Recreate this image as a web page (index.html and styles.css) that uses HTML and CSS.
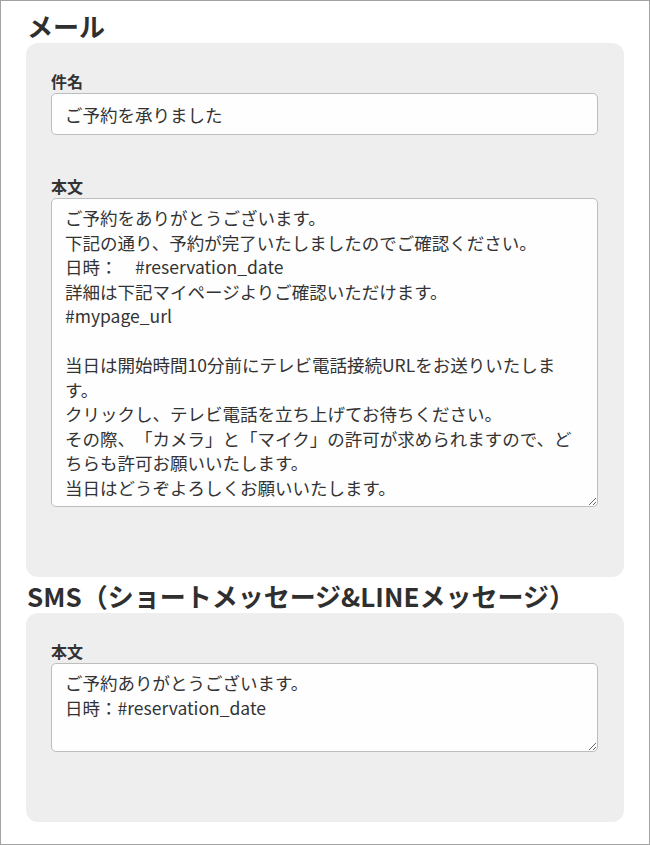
FILE: index.html
```html
<!DOCTYPE html>
<html lang="ja">
<head>
    <meta charset="utf-8">
    <title>メッセージ設定</title>
    <link rel="stylesheet" href="styles.css">
</head>
<body>
<div class="frame">
    <section class="section">
        <h2 class="section-title">メール</h2>
        <div class="panel">
            <div class="field">
                <label class="field-label" for="mail-subject">件名</label>
                <input class="text-input" id="mail-subject" type="text" value="ご予約を承りました">
            </div>
            <div class="field">
                <label class="field-label" for="mail-body">本文</label>
                <textarea class="text-area mail-body" id="mail-body">ご予約をありがとうございます。
下記の通り、予約が完了いたしましたのでご確認ください。
日時：　#reservation_date
詳細は下記マイページよりご確認いただけます。
#mypage_url

当日は開始時間10分前にテレビ電話接続URLをお送りいたします。
クリックし、テレビ電話を立ち上げてお待ちください。
その際、「カメラ」と「マイク」の許可が求められますので、どちらも許可お願いいたします。
当日はどうぞよろしくお願いいたします。</textarea>
            </div>
        </div>
    </section>
    <section class="section">
        <h2 class="section-title">SMS（ショートメッセージ&amp;LINEメッセージ）</h2>
        <div class="panel">
            <div class="field">
                <label class="field-label" for="sms-body">本文</label>
                <textarea class="text-area sms-body" id="sms-body">ご予約ありがとうございます。
日時：#reservation_date</textarea>
            </div>
        </div>
    </section>
</div>
</body>
</html>
```

FILE: styles.css
```css
body {
    margin: 0;
    font-family: "Noto Sans CJK JP", "Noto Sans", sans-serif;
    color: #333;
    text-spacing-trim: space-all;
}
.frame {
    box-sizing: border-box;
    height: 845px;
    border: 1px solid #a3a3a3;
    padding: 8px 25px 0;
    background-color: white;
}
.section + .section {
    margin-top: 2px;
}
.section-title {
    margin: 0;
    font-size: 26px;
    line-height: 34px;
    font-weight: bold;
    color: #2f2f2f;
    padding-left: 1px;
}
.panel {
    background-color: #eeeeee;
    border-radius: 12px;
    padding: 26px 26px 69px 25px;
}
.panel:last-child {
    padding-bottom: 70px;
}
.field + .field {
    margin-top: 39px;
}
.field-label {
    display: block;
    font-size: 16px;
    line-height: 24px;
    font-weight: bold;
}
.text-input,
.text-area {
    display: block;
    box-sizing: border-box;
    width: 100%;
    margin: 0;
    border: 1px solid #bdbdbd;
    border-radius: 5px;
    background-color: #fefefe;
    color: #333;
    font-family: inherit;
    font-size: 17.5px;
    text-spacing-trim: space-all;
}
.text-input {
    height: 42px;
    padding: 0 13px;
}
.text-area {
    padding: 7px 18px 7px 13px;
    line-height: 24.5px;
    overflow: hidden;
    resize: vertical;
}
.mail-body {
    height: 309px;
}
.sms-body {
    height: 89px;
}
```
